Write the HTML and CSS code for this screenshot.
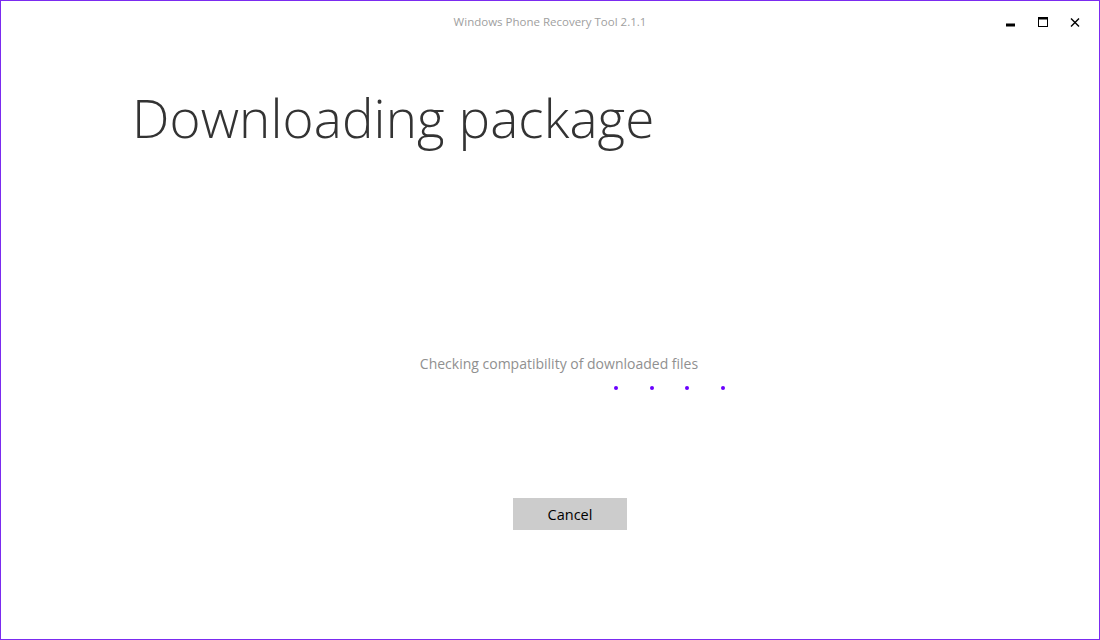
FILE: index.html
```html
<!DOCTYPE html>
<html>
<head>
<meta charset="utf-8">
<link rel="stylesheet" href="styles.css">
</head>
<body>
<div class="window">
  <div class="titlebar">
    <div></div>
    <div class="title">Windows Phone Recovery Tool 2.1.1</div>
    <div class="controls">
      <span class="ctl min"><svg width="10" height="10" viewBox="0 0 10 10"><rect x="0" y="6.5" width="9" height="3" fill="#000"/></svg></span>
      <span class="ctl max"><svg width="10" height="10" viewBox="0 0 10 10"><rect x="0.5" y="0.5" width="9" height="9" fill="none" stroke="#000"/><rect x="0" y="0" width="10" height="2.5" fill="#000"/></svg></span>
      <span class="ctl close"><svg width="10" height="10" viewBox="0 0 10 10"><path d="M1 1.5 L9 9.5 M9 1.5 L1 9.5" stroke="#000" stroke-width="1.4"/></svg></span>
    </div>
  </div>
  <h1 class="heading">Downloading package</h1>
  <div class="content">
    <div class="status">Checking compatibility of downloaded files</div>
    <div class="dots"><span></span><span></span><span></span><span></span></div>
    <button class="cancel">Cancel</button>
  </div>
</div>
</body>
</html>
```
FILE: styles.css
```css
html, body {
  margin: 0;
  padding: 0;
  background: #fff;
}
.window {
  width: 1100px;
  height: 640px;
  box-sizing: border-box;
  border: 1px solid #7b2bf0;
  display: flex;
  flex-direction: column;
  font-family: "Open Sans", "Noto Sans", sans-serif;
}
.titlebar {
  display: grid;
  grid-template-columns: 1fr auto 1fr;
  align-items: center;
  height: 40px;
}
.title {
  font-size: 11.5px;
  color: #a0a0a0;
  padding-top: 1px;
}
.controls {
  justify-self: end;
  display: flex;
  align-items: center;
  gap: 22px;
  padding-right: 19px;
  margin-top: 2px;
}
.ctl {
  display: flex;
  width: 10px;
  height: 10px;
}
.heading {
  margin: 42px 0 0 131px;
  font-size: 53px;
  font-weight: 300;
  color: #333;
  line-height: 70px;
  letter-spacing: 0.1px;
}
.content {
  display: flex;
  flex-direction: column;
  align-items: center;
  padding-top: 201px;
  padding-left: 18px;
}
.status {
  font-size: 14px;
  color: #909090;
  line-height: 20px;
}
.dots {
  display: flex;
  gap: 31.5px;
  margin-top: 12px;
  margin-left: 221px;
}
.dots span {
  width: 4px;
  height: 4px;
  border-radius: 50%;
  background: #6a00ff;
}
.cancel {
  margin-top: 108px;
  margin-left: 22px;
  width: 114px;
  height: 32px;
  border: none;
  background: #cccccc;
  font-family: "Open Sans", "Noto Sans", sans-serif;
  font-size: 14.5px;
  font-weight: 500;
  color: #000;
}
```
